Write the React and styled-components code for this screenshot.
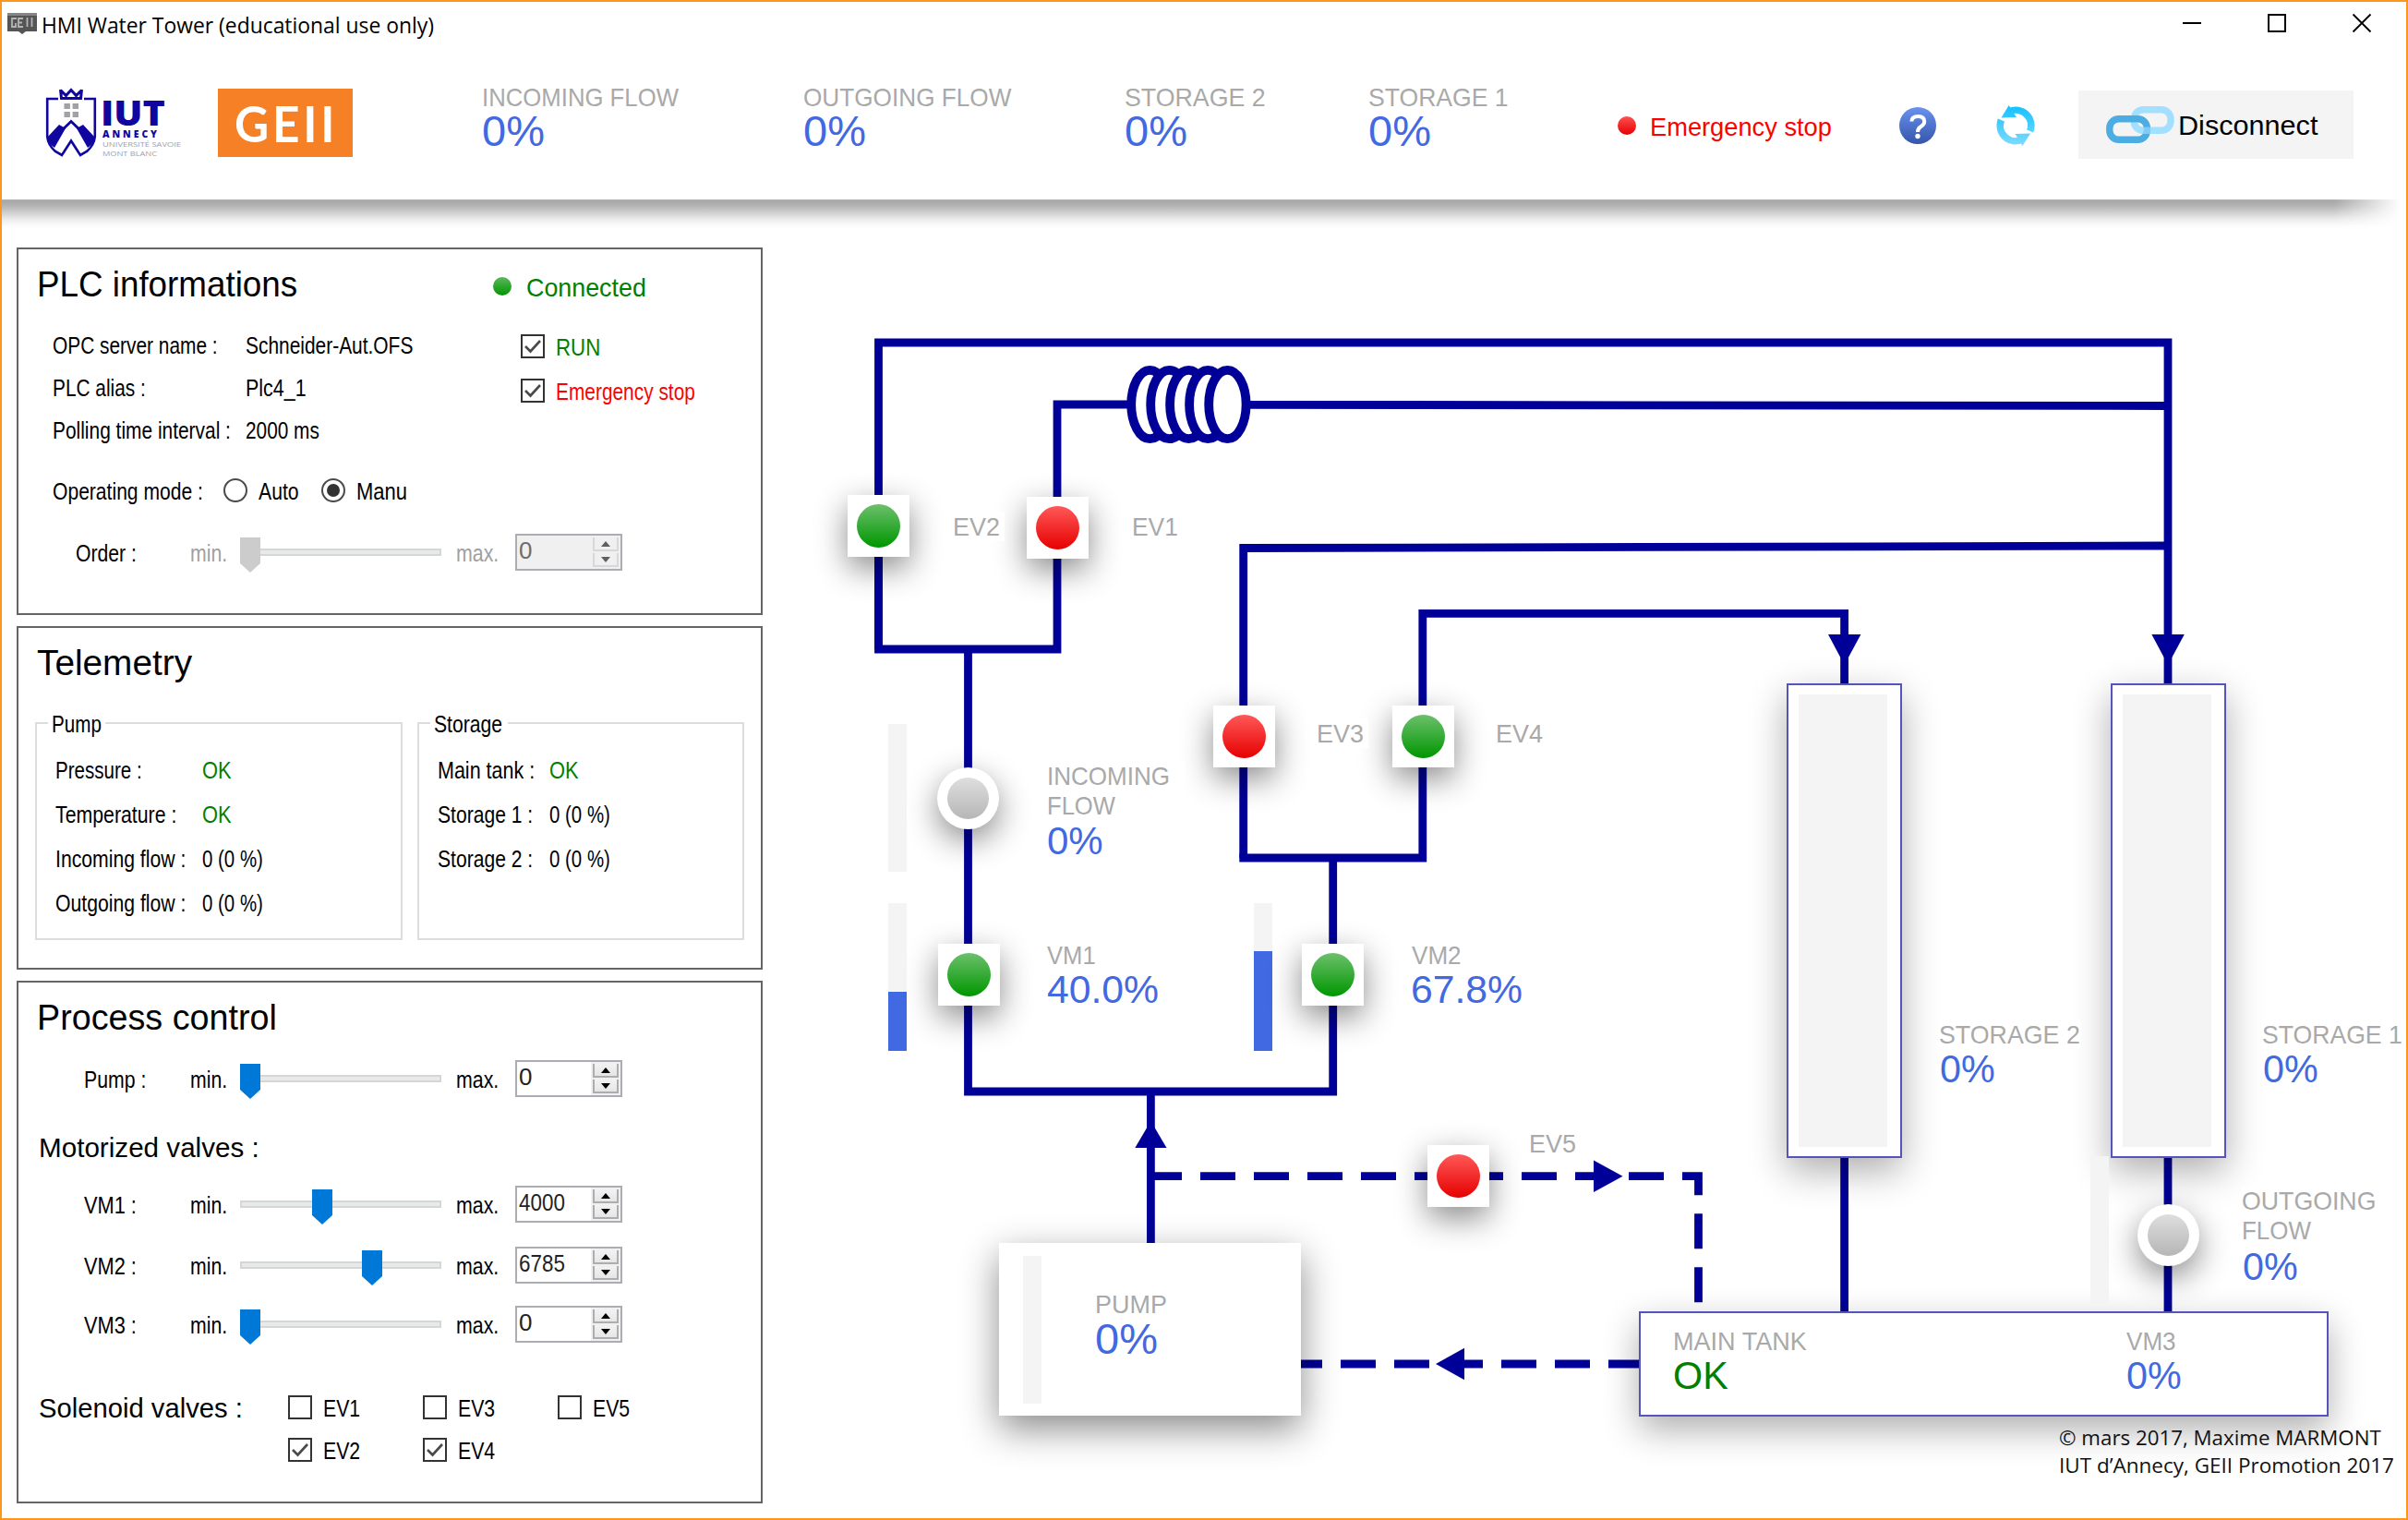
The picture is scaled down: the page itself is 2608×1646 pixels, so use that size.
import React, { useLayoutEffect, useRef, useState } from 'react';
import styled, { createGlobalStyle } from 'styled-components';

const NAVY = '#000099';
const BLUE = '#4169e1';
const GREEN = '#008000';
const GREY = '#a9a9a9';
const SANS = '"Liberation Sans", Arial, sans-serif';
const HUMANIST = '"Open Sans", "Noto Sans", sans-serif';

const GlobalStyle = createGlobalStyle`
  * { box-sizing: border-box; }
  body { margin: 0; background: #fff; font-family: ${SANS}; color: #000; }
`;

/* ---------- text set to a fixed measure ---------- */
const FitBox = styled.span`
  display: block;
  flex: none;
  width: ${(p) => p.$w}px;
  height: ${(p) => p.$lh}px;
  line-height: ${(p) => p.$lh}px;
  font-family: ${(p) => p.$font};
  font-size: ${(p) => p.$size}px;
  font-weight: ${(p) => p.$weight};
  letter-spacing: ${(p) => p.$track}px;
  color: ${(p) => p.$color};
  white-space: nowrap;
`;
const FitInner = styled.span`
  display: inline-block;
  transform-origin: 0 50%;
`;

function Text({ w, size = 26, lh, color = '#000', font = SANS, weight = 400, track = 0, children }) {
  const ref = useRef(null);
  const [scale, setScale] = useState(1);
  useLayoutEffect(() => {
    setScale(w / ref.current.offsetWidth);
  }, [w, children]);
  return (
    <FitBox $w={w} $size={size} $lh={lh || Math.round(size * 1.2)} $color={color} $font={font} $weight={weight} $track={track}>
      <FitInner ref={ref} style={{ transform: `translateY(1px) scaleX(${scale})` }}>{children}</FitInner>
    </FitBox>
  );
}

/* ---------- window ---------- */
const Window = styled.div`
  width: 2608px;
  height: 1646px;
  border: 2px solid #ff961c;
  background: #fff;
  display: flex;
  flex-direction: column;
  overflow: hidden;
`;
const TitleBar = styled.div`
  flex: none;
  height: 48px;
  display: flex;
  align-items: center;
  justify-content: space-between;
  padding: 0 37px 0 6px;
`;
const TitleLeft = styled.div`
  display: flex;
  align-items: center;
  gap: 5px;
`;
const WindowButtons = styled.div`
  display: flex;
  gap: 71px;
  padding-bottom: 2px;
`;
const GlyphSvg = styled.svg`
  display: block;
  flex: none;
  overflow: visible;
`;

/* ---------- header ---------- */
const Header = styled.header`
  flex: none;
  height: 166px;
  padding-left: 47px;
  display: flex;
  align-items: center;
`;
const GeiiLogo = styled.div`
  width: 146px;
  height: 74px;
  margin-left: 39px;
  padding-left: 18px;
  background: #f68026;
  display: flex;
  align-items: center;
`;
const Stats = styled.div`
  display: grid;
  grid-template-columns: 348px 348px 264px 270px;
  margin-left: 140px;
  padding-bottom: 16px;
`;
const Alarm = styled.div`
  display: flex;
  align-items: center;
  gap: 15px;
  padding-top: 5px;
`;
const Dot = styled.span`
  flex: none;
  width: 20px;
  height: 20px;
  border-radius: 50%;
  background: ${(p) => (p.$tone === 'red' ? 'linear-gradient(#ff5050, #e60000)' : 'linear-gradient(#5cb85c, #009600)')};
`;
const Tools = styled.div`
  display: flex;
  align-items: center;
  gap: 66px;
  margin-left: 73px;
  padding-top: 6px;
`;
const ConnectButton = styled.button`
  width: 298px;
  height: 74px;
  margin: 4px 0 0 48px;
  padding: 0 0 0 30px;
  border: 0;
  background: #f4f4f4;
  display: flex;
  align-items: center;
  gap: 3px;
`;
const HeaderShadow = styled.div`
  flex: none;
  height: 32px;
  background: linear-gradient(#b2b2b2 0, #a8a8a8 2px, #b4b4b4 7px, #cfcfcf 14px, #ededed 22px, #fafafa 28px, #fff 32px);
  mask-image: linear-gradient(90deg, #000 0, #000 2526px, transparent 2598px);
`;
const Body = styled.main`
  flex: 1;
  display: flex;
`;

/* ---------- side panels ---------- */
const Side = styled.aside`
  width: 824px;
  padding: 20px 0 0 16px;
  display: flex;
  flex-direction: column;
  gap: 12px;
`;
const Panel = styled.section`
  flex: none;
  height: ${(p) => p.$h}px;
  border: 2px solid #646464;
  padding-top: 16px;
`;
const PanelHead = styled.div`
  display: flex;
  align-items: center;
  height: 40px;
  padding-left: 20px;
`;
const Status = styled.div`
  display: flex;
  align-items: center;
  gap: 16px;
  padding-top: 8px;
  margin-left: 212px;
`;
const InfoArea = styled.div`
  display: flex;
  margin-top: 24px;
  padding-left: 37px;
  height: 138px;
`;
const InfoList = styled.div`
  display: grid;
  grid-template-columns: 209px 298px;
  grid-auto-rows: 46px;
  align-items: center;
`;
const FlagList = styled.div`
  display: grid;
  grid-auto-rows: 48px;
  align-content: start;
  padding-top: 1px;
`;
const CheckLabel = styled.label`
  display: flex;
  align-items: center;
  gap: 12px;
`;
const Box = styled.span`
  flex: none;
  width: 26px;
  height: 26px;
  border: 2px solid #333;
  background: #fff;
`;
const ModeRow = styled.div`
  display: flex;
  align-items: center;
  height: 40px;
  margin-top: 23px;
  padding-left: 37px;
`;
const RadioLabel = styled.label`
  display: flex;
  align-items: center;
  gap: 12px;
  margin-left: ${(p) => p.$ml}px;
`;
const Radio = styled.span`
  flex: none;
  width: 26px;
  height: 26px;
  border: 2px solid #4a4a4a;
  border-radius: 50%;
  padding: 4px;
  background: #fff;
`;
const RadioDot = styled.span`
  display: block;
  width: 14px;
  height: 14px;
  border-radius: 50%;
  background: ${(p) => (p.$on ? '#333' : '#fff')};
`;
const ControlRow = styled.div`
  display: grid;
  grid-template-columns: 186px 54px 234px 64px 116px;
  align-items: center;
  height: 40px;
  margin-top: ${(p) => p.$mt}px;
`;
const ControlName = styled.div`
  padding-left: ${(p) => p.$pl}px;
`;
const SliderBox = styled.div`
  position: relative;
  width: 218px;
  height: 40px;
  padding-top: 16px;
`;
const Track = styled.div`
  height: 8px;
  border: 2px solid #d6d6d6;
  background: #e7eaea;
`;
const Thumb = styled.div`
  position: absolute;
  top: 4px;
  left: ${(p) => p.$x}px;
  width: 22px;
  height: 38px;
  background: ${(p) => (p.$off ? '#cccccc' : '#0078d7')};
  clip-path: polygon(0 0, 100% 0, 100% 74%, 50% 100%, 0 74%);
`;
const SpinBox = styled.div`
  width: 116px;
  height: 40px;
  border: 2px solid #abadb3;
  background: ${(p) => (p.$off ? '#f0f0f0' : '#fff')};
  display: flex;
  justify-content: space-between;
  padding-left: 2px;
`;
const SpinButtons = styled.div`
  width: 32px;
  height: 36px;
  padding: 2px;
  background: #f0f0f0;
  display: grid;
  grid-template-rows: 15px 15px;
  gap: 2px;
`;
const SpinButton = styled.div`
  border: solid ${(p) => (p.$off ? '#d8d8d8' : '#adadad')};
  border-width: 0 2px 2px 2px;
  background: ${(p) => (p.$off ? '#f0f0f0' : 'linear-gradient(#f2f2f2, #e6e6e6)')};
  display: flex;
  align-items: center;
  justify-content: center;
`;
const SectionTitle = styled.div`
  display: flex;
  align-items: center;
  height: 40px;
  margin-top: 34px;
  padding-left: 22px;
`;
const Groups = styled.div`
  display: grid;
  grid-template-columns: 398px 354px;
  gap: 16px;
  margin-top: 46px;
  padding-left: 18px;
`;
const Group = styled.div`
  height: 236px;
  border: 2px solid #dcdcdc;
`;
const Legend = styled.div`
  width: ${(p) => p.$w}px;
  height: 30px;
  margin: -16px 0 11px 12px;
  padding-left: 4px;
  background: #fff;
`;
const Readings = styled.div`
  display: grid;
  grid-template-columns: ${(p) => p.$first}px auto;
  grid-auto-rows: 48px;
  align-items: center;
  padding-left: 20px;
`;
const Solenoids = styled.div`
  display: grid;
  grid-template-columns: 270px 146px 146px 146px;
  grid-auto-rows: 46px;
  align-items: center;
  margin-top: 47px;
  padding-left: 22px;
`;
const Shift = styled.div`
  grid-column: ${(p) => p.$col};
`;

/* ---------- synoptic canvas ---------- */
const OX = 826;
const OY = 248;
const Canvas = styled.div`
  position: relative;
  flex: 1;
`;
const Piping = styled.svg`
  position: absolute;
  left: 0;
  top: 0;
`;
const Placed = styled.div`
  position: absolute;
  left: ${(p) => p.$x - OX}px;
  top: ${(p) => p.$y - OY}px;
`;
const Tank = styled(Placed)`
  width: ${(p) => p.$w}px;
  height: ${(p) => p.$h}px;
  background: #fff;
  border: ${(p) => (p.$plain ? '0' : '2px solid #5454ba')};
  padding: ${(p) => p.$pad || 0};
  box-shadow: 0 14px 38px rgba(0, 0, 0, ${(p) => (p.$plain ? 0.46 : 0.32)});
`;
const TankLevel = styled.div`
  width: 96px;
  height: 490px;
  background: #f4f4f4;
`;
const Gauge = styled(Placed)`
  width: 20px;
  height: 160px;
  background: #f4f4f4;
  display: flex;
  align-items: flex-end;
`;
const GaugeFill = styled.div`
  width: 100%;
  background: ${BLUE};
`;
const Valve = styled(Placed)`
  width: 67px;
  height: 67px;
  margin: -33.5px 0 0 -33.5px;
  border-radius: ${(p) => (p.$round ? '50%' : '0')};
  background: #fff;
  display: flex;
  align-items: center;
  justify-content: center;
  box-shadow: 0 12px 34px rgba(0, 0, 0, 0.46);
`;
const tones = {
  red: 'linear-gradient(#ff5858, #e60000)',
  green: 'linear-gradient(#6cc06c, #009600)',
  grey: 'linear-gradient(#dedede, #b6b6b6)',
};
const Lamp = styled.div`
  width: ${(p) => (p.$tone === 'grey' ? 45 : 47)}px;
  height: ${(p) => (p.$tone === 'grey' ? 45 : 47)}px;
  border-radius: 50%;
  background: ${(p) => tones[p.$tone]};
`;
const Tag = styled(Placed)`
  background: #fff;
  padding-right: ${(p) => p.$pr || 0}px;
`;

/* top of a line box whose text sits on the given baseline */
const topFor = (baseline, size, lh) => baseline - lh / 2 - size * 0.3465;

function Caption({ x, base, w, size = 28, color = GREY, pr, children }) {
  const lh = Math.round(size * 1.14);
  return (
    <Tag $x={x + 1} $y={topFor(base, size, lh)} $pr={pr}>
      <Text w={w - 2} size={size} lh={lh} color={color}>{children}</Text>
    </Tag>
  );
}

function Stat({ name, w }) {
  return (
    <div>
      <Text w={w} size={28.5} lh={32} color={GREY}>{name}</Text>
      <Text w={68} size={47} lh={42} color={BLUE}>0%</Text>
    </div>
  );
}

function Check({ on, w, color, children }) {
  return (
    <CheckLabel>
      <Box>
        {on && (
          <GlyphSvg width="22" height="22" viewBox="0 0 22 22">
            <path d="M3 11 L8.5 16.5 L19 5" fill="none" stroke="#4a4a4a" strokeWidth="2.6" />
          </GlyphSvg>
        )}
      </Box>
      <Text w={w} color={color}>{children}</Text>
    </CheckLabel>
  );
}

function Control({ name, nameW, pl, mt, x, value, valueW, off }) {
  return (
    <ControlRow $mt={mt}>
      <ControlName $pl={pl}><Text w={nameW}>{name}</Text></ControlName>
      <Text w={40} color={off ? '#a0a0a0' : '#000'}>min.</Text>
      <SliderBox>
        <Track />
        <Thumb $x={x} $off={off} />
      </SliderBox>
      <Text w={46} color={off ? '#a0a0a0' : '#000'}>max.</Text>
      <SpinBox $off={off}>
        <Text w={valueW} lh={30} color={off ? '#6d6d6d' : '#222'}>{value}</Text>
        <SpinButtons>
          <SpinButton $off={off}>
            <GlyphSvg width="10" height="6" viewBox="0 0 10 6"><path d="M0 6 L5 0 L10 6Z" fill={off ? '#606060' : '#000'} /></GlyphSvg>
          </SpinButton>
          <SpinButton $off={off}>
            <GlyphSvg width="10" height="6" viewBox="0 0 10 6"><path d="M0 0 L5 6 L10 0Z" fill={off ? '#606060' : '#000'} /></GlyphSvg>
          </SpinButton>
        </SpinButtons>
      </SpinBox>
    </ControlRow>
  );
}

function IutLogo() {
  return (
    <GlyphSvg width="148" height="74" viewBox="49 97 148 74">
      <g fill="none" stroke="#10069f">
        <path d="M63 108 H51.2 V149 Q52 158 60 165 L67 169 L77 153.5 L87 169 L94 165 Q102 158 102.8 149 V108 H91" strokeWidth="2.6" />
        <path d="M65.5 98 L66.5 107.5 H87.5 L88.5 98 M66 99 L71.5 104.5 L77 98.5 L82.5 104.5 L88 99" strokeWidth="3" />
        <path d="M64 145 L77 132.5 L90 145" strokeWidth="2.8" />
      </g>
      <path d="M51 150 L64 136 L71 140 L59 161 Q52 156 51 150Z M103 150 L90 136 L83 140 L95 161 Q102 156 103 150Z" fill="#10069f" />
      <path d="M69.5 113h6.4v6h-6.4z M78.6 113h6.4v6h-6.4z M69.5 122h6.4v6h-6.4z M78.6 122h6.4v6h-6.4z" fill="#a2a2a6" />
      <g fontFamily="Open Sans, Noto Sans, sans-serif">
        <text x="109" y="137" fontSize="37" fontWeight="800" fill="#10069f" textLength="70" lengthAdjust="spacingAndGlyphs">IUT</text>
        <text x="111" y="149.7" fontSize="10.4" fontWeight="800" fill="#10069f" textLength="59" lengthAdjust="spacing">ANNECY</text>
        <text x="111" y="160" fontSize="8" fill="#a0a0a4" textLength="85" lengthAdjust="spacingAndGlyphs">UNIVERSITÉ SAVOIE</text>
        <text x="111" y="170" fontSize="8" fill="#a0a0a4" textLength="59" lengthAdjust="spacingAndGlyphs">MONT BLANC</text>
      </g>
    </GlyphSvg>
  );
}

function AppIcon() {
  return (
    <GlyphSvg width="32" height="24" viewBox="0 0 32 24">
      <path d="M0 0H32V20H20L16 23L12 20H0Z" fill="#555" />
      <path d="M0 0H32V3H0Z" fill="#858585" />
      <path d="M10 6H5V15H9V11 M17 6H12V15H17 M12 10.5H16 M21.5 5V15 M26.5 5V15" fill="none" stroke="#b4b4b4" strokeWidth="1.8" />
    </GlyphSvg>
  );
}

function HelpIcon() {
  return (
    <GlyphSvg width="40" height="40" viewBox="0 0 40 40">
      <defs><linearGradient id="help" x2="0" y2="1"><stop stopColor="#6a92f0" /><stop offset="1" stopColor="#3555a8" /></linearGradient></defs>
      <circle cx="20" cy="20" r="20" fill="url(#help)" />
      <path d="M13.4 15.5 Q13.4 10 20.4 10 Q27.2 10 27.2 15.5 Q27.2 18.6 23.8 20.8 Q20 23 20 27" fill="none" stroke="#fff" strokeWidth="4" />
      <circle cx="20" cy="31.5" r="2.7" fill="#fff" />
    </GlyphSvg>
  );
}

function RefreshIcon() {
  return (
    <GlyphSvg width="40" height="44" viewBox="0 0 40 44">
      <defs><linearGradient id="sync" gradientUnits="userSpaceOnUse" x1="0" y1="0" x2="0" y2="44"><stop stopColor="#14c0ff" /><stop offset="1" stopColor="#7edcff" /></linearGradient></defs>
      <path d="M13 6.9 A16.6 16.6 0 0 1 35.6 28" fill="none" stroke="url(#sync)" strokeWidth="7.6" />
      <path d="M27 37.1 A16.6 16.6 0 0 1 4.4 16" fill="none" stroke="url(#sync)" strokeWidth="7.6" />
      <path d="M12.7 0 L4.5 13.4 L21 13 Z M27.5 44 L36 30.4 L19.5 31 Z" fill="url(#sync)" />
    </GlyphSvg>
  );
}

function LinkIcon() {
  return (
    <GlyphSvg width="74" height="40" viewBox="0 0 74 40">
      <rect x="30.3" y="3.7" width="39.7" height="22.6" rx="10" fill="none" stroke="#a3e0ff" strokeWidth="7.4" />
      <rect x="3.8" y="13.7" width="40.6" height="22.6" rx="10" fill="none" stroke="#4bade2" strokeWidth="7.4" />
      <path d="M30.3 18 A10 10 0 0 0 40.3 26.3 H50" fill="none" stroke="#a3e0ff" strokeWidth="7.4" opacity=".6" />
    </GlyphSvg>
  );
}

function Pipes() {
  return (
    <Piping width="1780" height="1396" viewBox={`${OX} ${OY} 1780 1396`}>
      <g fill="none" stroke={NAVY} strokeWidth="8.8">
        <path d="M951.5 703 V371 H2348 V744" />
        <path d="M951.5 540 V703 H1145 V438 H1224" />
        <path d="M1350 438.3 L2348 439.5" />
        <path d="M1048.5 703 V1182 H1443.7 V929" />
        <path d="M1346.7 929 V593.5 L2348 591" />
        <path d="M1342.3 929 H1545.2 M1540.8 929 V664.3 H1997.6 V744" />
        <path d="M1246.4 1182 V1350" />
        <path d="M1997.6 1252 V1422 M2348 1252 V1422" />
        <path d="M1242 1273.7 H1839.5 V1414" strokeDasharray="38 20" />
        <path d="M1394 1477 H1776" strokeDasharray="38 20" />
      </g>
      <g fill={NAVY}>
        <path d="M1246.4 1214 L1263.5 1243 H1229.3 Z" />
        <path d="M1757.5 1273.7 L1726 1256.5 V1291 Z" />
        <path d="M1555 1477 L1586 1459.7 V1494.3 Z" />
        <path d="M1980 687 H2015.4 L1997.6 720 Z" />
        <path d="M2330.4 687 H2365.8 L2348 720 Z" />
      </g>
      <g fill="#fff" stroke={NAVY} strokeWidth="9.8">
        {[1245.4, 1266.4, 1287.3, 1308.3, 1329.4].map((cx) => (
          <ellipse key={cx} cx={cx} cy="438" rx="20.2" ry="37.2" />
        ))}
      </g>
    </Piping>
  );
}

export default function App() {
  return (
    <>
      <GlobalStyle />
      <Window>
        <TitleBar>
          <TitleLeft>
            <AppIcon />
            <Text w={425} size={24} lh={34} font={HUMANIST}>HMI Water Tower (educational use only)</Text>
          </TitleLeft>
          <WindowButtons>
            <GlyphSvg width="21" height="20" viewBox="0 0 21 20"><path d="M0 10H20" stroke="#000" strokeWidth="2" /></GlyphSvg>
            <GlyphSvg width="21" height="20" viewBox="0 0 21 20"><path d="M1 1H19V19H1Z" fill="none" stroke="#000" strokeWidth="2" /></GlyphSvg>
            <GlyphSvg width="21" height="20" viewBox="0 0 21 20"><path d="M.5 .5L19.5 19.5M19.5 .5L.5 19.5" stroke="#000" strokeWidth="1.8" /></GlyphSvg>
          </WindowButtons>
        </TitleBar>

        <Header>
          <IutLogo />
          <GeiiLogo>
            <Text w={112} size={53} lh={74} color="#fff" weight={700} track={4} font='Lato, "Open Sans", sans-serif'>GEII</Text>
          </GeiiLogo>
          <Stats>
            <Stat name="INCOMING FLOW" w={213} />
            <Stat name="OUTGOING FLOW" w={225} />
            <Stat name="STORAGE 2" w={153} />
            <Stat name="STORAGE 1" w={152} />
          </Stats>
          <Alarm>
            <Dot $tone="red" />
            <Text w={197} size={28.5} color="#f00">Emergency stop</Text>
          </Alarm>
          <Tools>
            <HelpIcon />
            <RefreshIcon />
          </Tools>
          <ConnectButton>
            <LinkIcon />
            <Text w={151} size={30}>Disconnect</Text>
          </ConnectButton>
        </Header>
        <HeaderShadow />

        <Body>
          <Side>
            <Panel $h={398}>
              <PanelHead>
                <Text w={282} size={39}>PLC informations</Text>
                <Status>
                  <Dot $tone="green" />
                  <Text w={130} size={28.5} color={GREEN}>Connected</Text>
                </Status>
              </PanelHead>
              <InfoArea>
                <InfoList>
                  <Text w={179}>OPC server name :</Text>
                  <Text w={181}>Schneider-Aut.OFS</Text>
                  <Text w={101}>PLC alias :</Text>
                  <Text w={66}>Plc4_1</Text>
                  <Text w={193}>Polling time interval :</Text>
                  <Text w={80}>2000 ms</Text>
                </InfoList>
                <FlagList>
                  <Check on w={48} color={GREEN}>RUN</Check>
                  <Check on w={151} color="#f00">Emergency stop</Check>
                </FlagList>
              </InfoArea>
              <ModeRow>
                <Text w={163} lh={34}>Operating mode :</Text>
                <RadioLabel $ml={22}>
                  <Radio><RadioDot /></Radio>
                  <Text w={44}>Auto</Text>
                </RadioLabel>
                <RadioLabel $ml={24}>
                  <Radio><RadioDot $on /></Radio>
                  <Text w={55}>Manu</Text>
                </RadioLabel>
              </ModeRow>
              <Control name="Order :" nameW={66} pl={62} mt={27} x={0} value="0" valueW={14} off />
            </Panel>

            <Panel $h={372}>
              <PanelHead><Text w={168} size={39}>Telemetry</Text></PanelHead>
              <Groups>
                <Group>
                  <Legend $w={62}><Text w={54} lh={30}>Pump</Text></Legend>
                  <Readings $first={159}>
                    <Text w={94}>Pressure :</Text><Text w={32} color={GREEN}>OK</Text>
                    <Text w={131}>Temperature :</Text><Text w={32} color={GREEN}>OK</Text>
                    <Text w={141}>Incoming flow :</Text><Text w={66}>0 (0 %)</Text>
                    <Text w={141}>Outgoing flow :</Text><Text w={66}>0 (0 %)</Text>
                  </Readings>
                </Group>
                <Group>
                  <Legend $w={84}><Text w={74} lh={30}>Storage</Text></Legend>
                  <Readings $first={121}>
                    <Text w={105}>Main tank :</Text><Text w={32} color={GREEN}>OK</Text>
                    <Text w={103}>Storage 1 :</Text><Text w={66}>0 (0 %)</Text>
                    <Text w={103}>Storage 2 :</Text><Text w={66}>0 (0 %)</Text>
                  </Readings>
                </Group>
              </Groups>
            </Panel>

            <Panel $h={566}>
              <PanelHead><Text w={260} size={39}>Process control</Text></PanelHead>
              <Control name="Pump :" nameW={67} pl={71} mt={28} x={0} value="0" valueW={14} />
              <SectionTitle><Text w={239} size={30}>Motorized valves :</Text></SectionTitle>
              <Control name="VM1 :" nameW={57} pl={71} mt={22} x={78} value="4000" valueW={50} />
              <Control name="VM2 :" nameW={57} pl={71} mt={26} x={132} value="6785" valueW={50} />
              <Control name="VM3 :" nameW={57} pl={71} mt={24} x={0} value="0" valueW={14} />
              <Solenoids>
                <Text w={221} size={30}>Solenoid valves :</Text>
                <Check w={40}>EV1</Check>
                <Check w={40}>EV3</Check>
                <Check w={40}>EV5</Check>
                <Shift $col={2}><Check on w={40}>EV2</Check></Shift>
                <Shift $col={3}><Check on w={40}>EV4</Check></Shift>
              </Solenoids>
            </Panel>
          </Side>

          <Canvas>
            <Pipes />
            <Tank $x={1935} $y={740} $w={125} $h={514} $pad="10px 11px"><TankLevel /></Tank>
            <Tank $x={2285.5} $y={740} $w={125} $h={514} $pad="10px 11px"><TankLevel /></Tank>
            <Tank $x={1775} $y={1420} $w={747} $h={114} />
            <Tank $x={1082} $y={1346} $w={327} $h={187} $plain />

            <Gauge $x={962} $y={784} />
            <Gauge $x={962} $y={978}><GaugeFill style={{ height: '40%' }} /></Gauge>
            <Gauge $x={1358} $y={978}><GaugeFill style={{ height: '67.8%' }} /></Gauge>
            <Gauge $x={1108} $y={1360} />
            <Gauge $x={2264} $y={1252} />

            <Valve $x={951.5} $y={569.5}><Lamp $tone="green" /></Valve>
            <Valve $x={1145} $y={571.5}><Lamp $tone="red" /></Valve>
            <Valve $x={1347} $y={797}><Lamp $tone="red" /></Valve>
            <Valve $x={1541.2} $y={797}><Lamp $tone="green" /></Valve>
            <Valve $x={1049} $y={1055.5}><Lamp $tone="green" /></Valve>
            <Valve $x={1443.7} $y={1055.5}><Lamp $tone="green" /></Valve>
            <Valve $x={1579} $y={1273.5}><Lamp $tone="red" /></Valve>
            <Valve $x={1048.7} $y={864.5} $round><Lamp $tone="grey" /></Valve>
            <Valve $x={2348} $y={1337} $round><Lamp $tone="grey" /></Valve>

            <Caption x={1031} base={580} w={53} pr={5}>EV2</Caption>
            <Caption x={1225} base={580} w={52}>EV1</Caption>
            <Caption x={1425} base={804} w={53} pr={5}>EV3</Caption>
            <Caption x={1619} base={804} w={53}>EV4</Caption>
            <Caption x={1655} base={1248} w={53}>EV5</Caption>

            <Caption x={1133} base={850} w={135} pr={16}>INCOMING</Caption>
            <Caption x={1133} base={882} w={76}>FLOW</Caption>
            <Caption x={1133} base={925} w={63} size={42} color={BLUE}>0%</Caption>
            <Caption x={1133} base={1044} w={55}>VM1</Caption>
            <Caption x={1133} base={1086} w={123} size={42} color={BLUE}>40.0%</Caption>
            <Caption x={1528} base={1044} w={56}>VM2</Caption>
            <Caption x={1527} base={1086} w={123} size={42} color={BLUE}>67.8%</Caption>
            <Caption x={1185} base={1422} w={80}>PUMP</Caption>
            <Caption x={1185} base={1465} w={70} size={47} color={BLUE}>0%</Caption>
            <Caption x={2099} base={1130} w={155}>STORAGE 2</Caption>
            <Caption x={2100} base={1172} w={62} size={42} color={BLUE}>0%</Caption>
            <Caption x={2449} base={1130} w={154}>STORAGE 1</Caption>
            <Caption x={2450} base={1172} w={62} size={42} color={BLUE}>0%</Caption>
            <Caption x={2427} base={1310} w={147}>OUTGOING</Caption>
            <Caption x={2427} base={1342} w={77}>FLOW</Caption>
            <Caption x={2428} base={1386} w={62} size={42} color={BLUE}>0%</Caption>
            <Caption x={1811} base={1462} w={147}>MAIN TANK</Caption>
            <Caption x={1811} base={1504} w={62} size={42} color={GREEN}>OK</Caption>
            <Caption x={2302} base={1462} w={56}>VM3</Caption>
            <Caption x={2302} base={1504} w={62} size={42} color={BLUE}>0%</Caption>

            <Placed $x={2230} $y={1541}>
              <Text w={349} size={22.5} lh={30} font={HUMANIST} color="#111">© mars 2017, Maxime MARMONT</Text>
              <Text w={363} size={22.5} lh={30} font={HUMANIST} color="#111">IUT d’Annecy, GEII Promotion 2017</Text>
            </Placed>
          </Canvas>
        </Body>
      </Window>
    </>
  );
}
